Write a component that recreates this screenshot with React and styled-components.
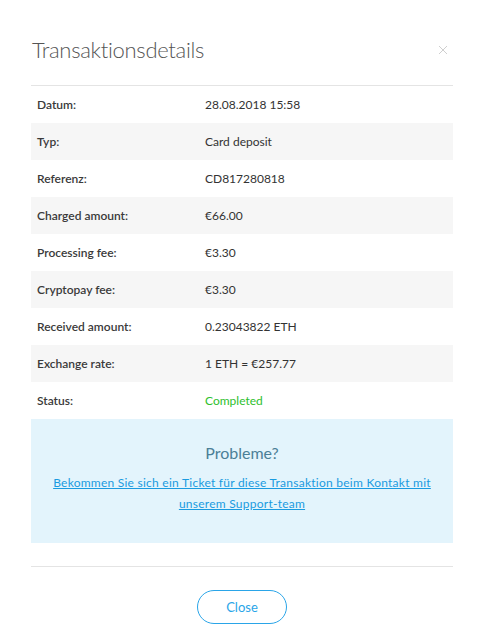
import React from "react";
import styled, { createGlobalStyle } from "styled-components";

const GlobalStyle = createGlobalStyle`
  html, body {
    margin: 0;
    padding: 0;
    background: #fff;
    font-family: Lato, "Open Sans", Arial, sans-serif;
  }
`;

const rows = [
  ["Datum:", "28.08.2018 15:58"],
  ["Typ:", "Card deposit"],
  ["Referenz:", "CD817280818"],
  ["Charged amount:", "€66.00"],
  ["Processing fee:", "€3.30"],
  ["Cryptopay fee:", "€3.30"],
  ["Received amount:", "0.23043822 ETH"],
  ["Exchange rate:", "1 ETH = €257.77"],
  ["Status:", "Completed", true],
];

const Modal = styled.div`
  width: 422px;
  padding: 35px 31px 6px;
  display: flex;
  flex-direction: column;
`;

const Header = styled.div`
  display: flex;
  justify-content: space-between;
  align-items: flex-start;
  height: 50px;
  border-bottom: 1px solid #e4e4e4;
`;

const Title = styled.h1`
  margin: 0;
  padding-left: 1px;
  font-size: 22px;
  font-weight: 300;
  letter-spacing: -0.3px;
  color: #555;
  line-height: 30px;
`;

const CloseX = styled.button`
  border: 0;
  background: none;
  padding: 0;
  margin: 8px 4px 0 0;
  width: 12px;
  height: 12px;
  cursor: pointer;
`;

const Table = styled.div`
  display: flex;
  flex-direction: column;
`;

const Row = styled.div`
  display: grid;
  grid-template-columns: 168px 1fr;
  align-items: center;
  height: 37px;
  padding-left: 6px;
  padding-bottom: 1px;
  box-sizing: border-box;
  background: ${(p) => (p.$alt ? "#f6f6f6" : "#fff")};
  font-size: 12px;
  color: #333;
`;

const Label = styled.span`
  font-weight: 600;
  color: #3a3a3a;
`;

const Value = styled.span`
  color: ${(p) => (p.$ok ? "#2ec02e" : "#333")};
`;

const HelpBox = styled.div`
  background: #e3f4fc;
  height: 124px;
  display: flex;
  flex-direction: column;
  align-items: center;
  padding-top: 23px;
  box-sizing: border-box;
  text-align: center;
`;

const HelpTitle = styled.div`
  font-size: 16px;
  color: #4b7f97;
  line-height: 22px;
  margin-bottom: 8px;
`;

const HelpLink = styled.a`
  font-size: 12px;
  line-height: 21px;
  letter-spacing: 0.25px;
  color: #1a9be0;
  text-decoration: underline;
  padding: 0 10px;
`;

const Footer = styled.div`
  margin-top: 23px;
  border-top: 1px solid #e4e4e4;
  display: flex;
  justify-content: center;
  padding-top: 23px;
`;

const CloseButton = styled.button`
  width: 90px;
  height: 34px;
  border: 1.5px solid #2aa5e8;
  border-radius: 17px;
  background: #fff;
  color: #2aa5e8;
  font-family: inherit;
  font-size: 13px;
  cursor: pointer;
`;

export default function App() {
  return (
    <>
      <GlobalStyle />
      <Modal>
        <Header>
          <Title>Transaktionsdetails</Title>
          <CloseX aria-label="close">
            <svg width="10" height="10" viewBox="0 0 10 10">
              <path d="M1 1L9 9M9 1L1 9" stroke="#cfcfcf" strokeWidth="1" />
            </svg>
          </CloseX>
        </Header>
        <Table>
          {rows.map(([label, value, ok], i) => (
            <Row key={label} $alt={i % 2 === 1}>
              <Label>{label}</Label>
              <Value $ok={ok}>{value}</Value>
            </Row>
          ))}
        </Table>
        <HelpBox>
          <HelpTitle>Probleme?</HelpTitle>
          <HelpLink href="#">
            Bekommen Sie sich ein Ticket für diese Transaktion beim Kontakt mit
            <br />
            unserem Support-team
          </HelpLink>
        </HelpBox>
        <Footer>
          <CloseButton>Close</CloseButton>
        </Footer>
      </Modal>
    </>
  );
}
